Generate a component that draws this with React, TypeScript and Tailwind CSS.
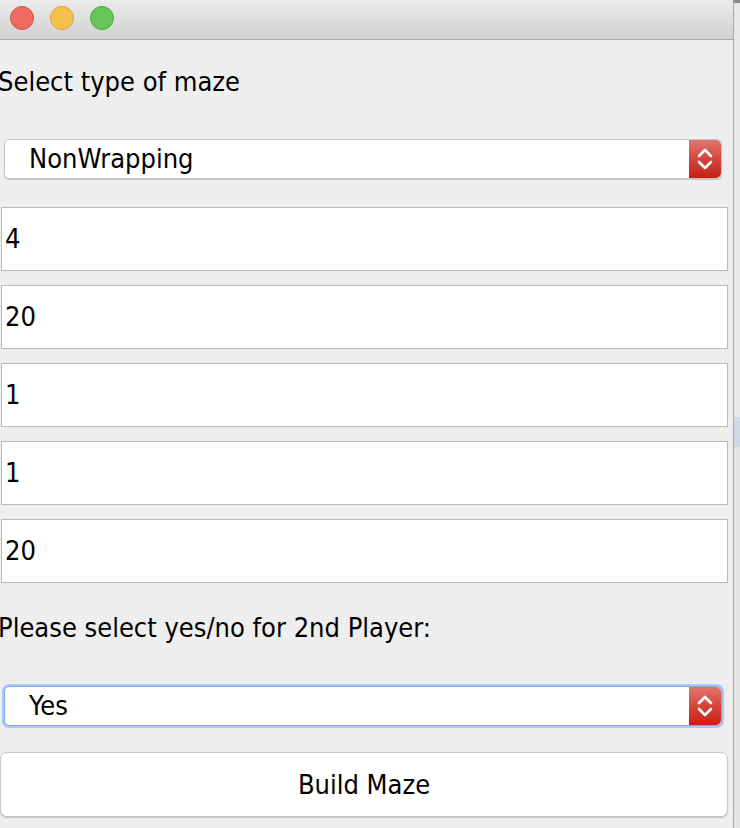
import React from 'react'

const font = "font-['DejaVu_Sans_Condensed','DejaVu_Sans',sans-serif] [font-stretch:condensed]"

const Arrows = () => {
  return (
    <div className="w-[32px] h-full rounded-r-[5px] bg-gradient-to-b from-[#e07670] via-[#d4443a] to-[#c41f10] flex items-center justify-center">
      <svg width="16" height="24" viewBox="0 0 16 24" fill="none">
        <path d="M2 9 L8 3 L14 9" stroke="white" strokeWidth="2.6" strokeLinecap="round" strokeLinejoin="round" />
        <path d="M2 15 L8 21 L14 15" stroke="white" strokeWidth="2.6" strokeLinecap="round" strokeLinejoin="round" />
      </svg>
    </div>
  )
}

const Combo = ({ value, focused }: { value: string; focused?: boolean }) => {
  return (
    <div
      className={
        focused
          ? 'mx-[4px] w-[718px] h-[40px] flex items-center bg-white rounded-[5px] border border-[#7fa9e6] shadow-[0_0_0_2px_#a9c8f2]'
          : 'mx-[4px] w-[718px] h-[40px] flex items-center bg-white rounded-[5px] border border-[#c4c4c4] shadow-[0_1px_1px_rgba(0,0,0,0.18)]'
      }
    >
      <span className="flex-1 pl-[24px] text-[27px] leading-[32px] text-black">{value}</span>
      <Arrows />
    </div>
  )
}

const Field = ({ value }: { value: string }) => {
  return (
    <div className="ml-[1px] w-[727px] h-[64px] flex items-center bg-white border border-[#bababa] pl-[3px] text-[27px] leading-[32px] text-black">
      {value}
    </div>
  )
}

export default function App() {
  return (
    <div className={`w-[740px] h-[828px] overflow-hidden bg-[#e2e2e2] flex ${font}`}>
      {/* Window */}
      <div className="w-[734px] h-[828px] bg-[#eeeeee] border-r border-[#a8a8a8] flex flex-col">
        {/* Title bar */}
        <div className="h-[40px] shrink-0 bg-gradient-to-b from-[#ebebeb] to-[#d1d1d1] border-b border-[#ababab] flex items-center pl-[10px] gap-[16px] pb-[4px]">
          <div className="w-[24px] h-[24px] rounded-full bg-[#ef6b60] border border-[#da5148]" />
          <div className="w-[24px] h-[24px] rounded-full bg-[#f6c04f] border border-[#dca23a]" />
          <div className="w-[24px] h-[24px] rounded-full bg-[#63c655] border border-[#4fa93f]" />
        </div>

        {/* Form */}
        <div className="flex flex-col">
          <div className="mt-[26px] -ml-[2px] text-[27px] leading-[32px] text-black whitespace-nowrap">Select type of maze</div>
          <div className="mt-[41px]">
            <Combo value="NonWrapping" />
          </div>
          <div className="mt-[28px] flex flex-col gap-[14px]">
            <Field value="4" />
            <Field value="20" />
            <Field value="1" />
            <Field value="1" />
            <Field value="20" />
          </div>
          <div className="mt-[29px] -ml-[2px] text-[27px] leading-[32px] text-black whitespace-nowrap">
            Please select yes/no for 2nd Player:
          </div>
          <div className="mt-[42px]">
            <Combo value="Yes" focused />
          </div>
          <button className="mt-[26px] w-[728px] h-[65px] bg-white border border-[#c8c8c8] rounded-[7px] shadow-[0_1px_1px_rgba(0,0,0,0.2)] text-[27px] leading-[32px] text-black">
            Build Maze
          </button>
        </div>
      </div>

      {/* Behind the window */}
      <div className="flex-1 flex flex-col">
        <div className="h-[3px] bg-[#8c8c8c]" />
        <div className="h-[284px] bg-[#e8e8e8] relative overflow-hidden">
          <span className="absolute left-[-1px] top-[284px] text-[27px] leading-[32px] text-black">e</span>
        </div>
        <div className="h-[130px] bg-[#e8e8e8]" />
        <div className="h-[30px] bg-[#cfd8e4]" />
        <div className="flex-1 bg-[#e4e4e4]" />
      </div>
    </div>
  )
}
